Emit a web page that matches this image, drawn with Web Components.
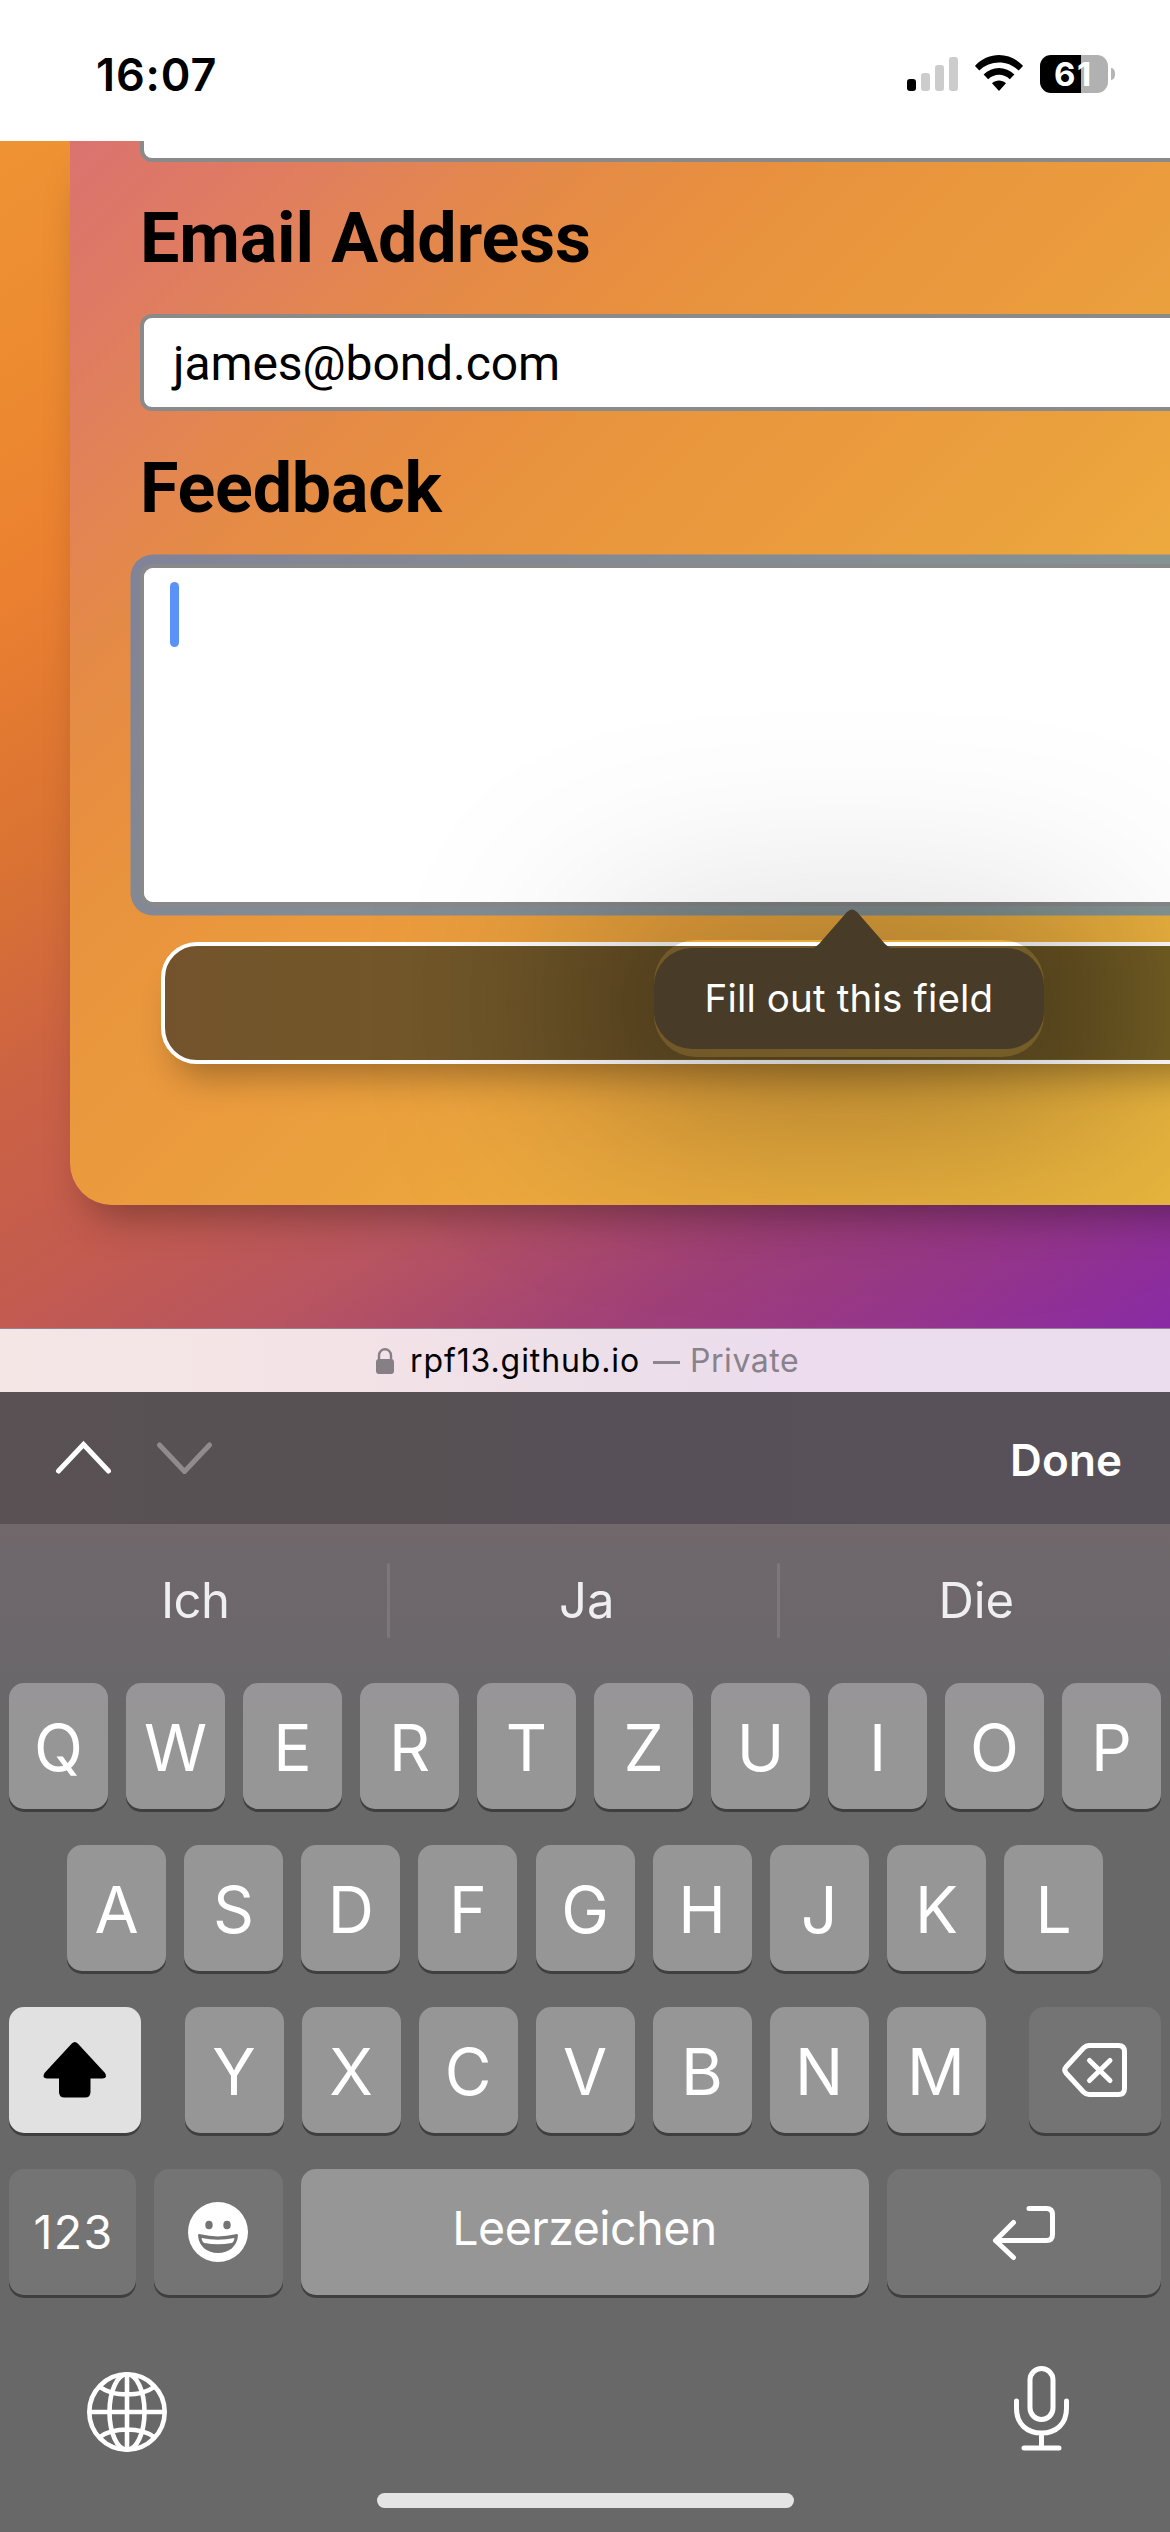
<!DOCTYPE html>
<html lang="de">
<head>
<meta charset="utf-8">
<title>Feedback form</title>
<style>
html,body{margin:0;padding:0;background:#686868}
body{width:1170px;height:2532px;overflow:hidden;font-family:Inter,"Liberation Sans",sans-serif}
</style>
</head>
<body>
<phone-screen></phone-screen>
<script>
const define = (name, html, init) => {
  const tpl = document.createElement('template');
  tpl.innerHTML = html;
  customElements.define(name, class extends HTMLElement {
    connectedCallback() {
      if (this.shadowRoot) return;
      this.attachShadow({ mode: 'open' }).append(tpl.content.cloneNode(true));
      if (init) init(this, this.shadowRoot);
    }
  });
};

/* Text whose visible glyphs span exactly `w` pixels, tracked to fit. */
define('ink-text', `
<style>
:host{display:block;flex:none;white-space:nowrap}
span{display:inline-block;white-space:pre;font-kerning:normal}
</style><span><slot></slot></span>`, (el, root) => {
  const w = +el.getAttribute('w'), text = el.textContent, cs = getComputedStyle(el);
  const ctx = document.createElement('canvas').getContext('2d');
  ctx.font = `${cs.fontWeight} ${cs.fontSize} ${cs.fontFamily}`;
  const m = ctx.measureText(text);
  const ink = m.actualBoundingBoxLeft + m.actualBoundingBoxRight;
  const span = root.querySelector('span');
  if (text.length > 1) span.style.letterSpacing = (w - ink) / (text.length - 1) + 'px';
  span.style.marginLeft = m.actualBoundingBoxLeft + 'px';
  el.style.width = w + 'px';
});

define('status-bar', `
<style>
:host{display:flex;box-sizing:border-box;height:141px;background:#fff;padding:54px 55px 0 98px;justify-content:space-between;align-items:flex-start;color:#000}
ink-text{font:600 45px/41px Inter,sans-serif}
.icons{display:flex;gap:17px;align-items:flex-start}
svg{display:block}
.signal{margin-top:3px}.wifi{margin-top:1px}
.batt{display:flex;gap:3px;align-items:center;margin-top:1px}
.cell{display:flex;align-items:center;width:68px;height:38px;border-radius:11px;background:linear-gradient(90deg,#000 41px,#b1b1b1 41px);color:#fff;padding-left:15px;box-sizing:border-box}
.cell ink-text{font:700 33px/38px Inter,sans-serif}
.nub{width:4px;height:12px;border-radius:0 5px 5px 0/0 6px 6px 0;background:#b5b5b5}
</style>
<ink-text w="117.5">16:07</ink-text>
<div class="icons">
<svg class="signal" width="51" height="34" viewBox="0 0 51 34"><rect y="22" width="9" height="12" rx="3"/><g fill="#ccc"><rect x="14" y="16" width="9" height="18" rx="3"/><rect x="28" y="8" width="9" height="26" rx="3"/><rect x="42" width="9" height="34" rx="3"/></g></svg>
<svg class="wifi" width="48" height="36" viewBox="0 0 48 36"><path d="M.5 10.2C14-3.4 34-3.4 47.5 10.2L48 11l-4.300 4.600C33 4.800 15 4.800 4.300 15.600L0 11z"/><path d="M8.600 19.500C17 10.800 31 10.800 39.400 19.500L34.800 24.200C29 18.200 19 18.200 13.200 24.200z"/><path d="M17 28.200C21 24.700 27 24.700 31 28.200L24 36z"/></svg>
<div class="batt"><div class="cell"><ink-text w="35">61</ink-text></div><div class="nub"></div></div>
</div>`);

define('field-label', `
<style>:host{display:flex;height:152.500px;padding-left:4px;color:#000}
ink-text{font:700 70px/154px Roboto,sans-serif}
:host([first]) ink-text{line-height:152px}</style>
<slot></slot>`, (el, root) => {
  const t = document.createElement('ink-text');
  t.setAttribute('w', el.getAttribute('w'));
  t.textContent = el.textContent;
  root.querySelector('slot').replaceWith(t);
});

define('email-input', `
<style>:host{display:flex;box-sizing:border-box;width:1120px;height:97px;border:4px solid #8a8a8a;border-radius:12px;background:#fff;padding-left:27px;color:#000}
ink-text{font:400 48px/91px Roboto,sans-serif}</style>
<ink-text w="386">james@bond.com</ink-text>`);

define('feedback-area', `
<style>:host{display:block;position:relative;box-sizing:border-box;width:1120px;height:342px;border:4.500px solid #8a898a;border-radius:13px;background:#fff;box-shadow:0 0 0 9.500px rgba(47,128,218,.55);padding:14px 26px}
:host::after{content:"";position:absolute;inset:0;border-radius:9px;z-index:2;background:rgba(255,255,255,.6)}
i{display:block;position:relative;z-index:3;width:9px;height:65px;border-radius:4.500px;background:#5a92f7}</style><i></i>`);

define('submit-button', `
<style>:host{display:block;box-sizing:border-box;width:1080px;height:122px;margin:36px 0 0 21px;border:4px solid #fff;border-radius:36px;background:linear-gradient(90deg,#74532c,#72562a 120px,#735929 500px,#755d28 860px,#766024 1010px);box-shadow:0 27px 36px -16px rgba(0,0,0,.32)}</style>`);

/* Drop shadow of the hint, cut out where the translucent bubble sits. */
define('hint-shadow', `
<style>:host{display:block;position:absolute;left:0;top:0;width:1170px;height:1187px;z-index:1;overflow:hidden;
clip-path:path(evenodd,"M0 0H1170V1187H0ZM696 799H1002A42 42 0 0 1 1044 841V874A42 42 0 0 1 1002 916H696A42 42 0 0 1 654 874V841A42 42 0 0 1 696 799Z")}
.glow{position:absolute;left:589px;top:788px;width:520px;height:150px;border-radius:60px;background:rgba(0,0,0,.45);filter:blur(108px)}
.tint{position:absolute;left:165px;top:806px;width:1005px;height:112px;background:linear-gradient(90deg,transparent 230px,rgba(0,0,0,.05) 360px,rgba(0,0,0,.12) 489px,rgba(0,0,0,.12) 895px,rgba(0,0,0,.03) 1005px)}</style>
<div class="glow"></div><div class="tint"></div>`);

define('hint-bubble', `
<style>:host{display:block;position:absolute;left:654px;top:799px;width:390px;height:117px;z-index:2}
.b{display:flex;align-items:center;justify-content:center;height:101px;margin-top:8px;border-radius:38px;background:#483b27;color:#fff;position:relative}
svg{position:absolute;left:157px;top:-39px}
ink-text{font:400 38.500px/101px Inter,sans-serif}</style>
<div class="b"><svg width="82" height="42" viewBox="0 0 82 42"><path d="M0 42V40Q4 39 8 35L36 3Q41-2 46 3L74 35Q78 39 82 40V42z" fill="#483c28"/></svg><ink-text w="283">Fill out this field</ink-text></div>`);

define('form-card', `
<style>:host{display:block;box-sizing:border-box;width:1240px;height:1064px;margin-left:70px;padding-left:70px;border-radius:0 0 42px 42px;
background:linear-gradient(135deg,#da7370 0,#df7c60 165px,#e1815a 226px,#e48a48 367px,#e8903e 515px,#e8933e 560px,#eb9c3d 800px,#eaa03d 900px,#eda83e 1050px,#e7b63e 1530px);
box-shadow:0 28px 42px -18px rgba(0,0,0,.34)}
.tail{box-sizing:border-box;width:1120px;height:20.500px;border:4px solid #8a8a8a;border-top:0;border-radius:0 0 12px 12px;background:#fff}</style>
<div class="tail"></div>
<field-label first w="445">Email Address</field-label>
<email-input></email-input>
<field-label w="299.500">Feedback</field-label>
<feedback-area></feedback-area>
<submit-button></submit-button>`);

define('web-page', `
<style>:host{display:block;position:relative;overflow:hidden;isolation:isolate;height:1187px;
background:linear-gradient(147deg,#ee9334 0,#ec8a30 218px,#eb8030 385px,#d97233 620px,#cb6244 805px,#c35b50 985px,#b85560 1136px,#a04078 1330px,#96368c 1480px,#8a2ba3 1623px)}</style>
<form-card></form-card><hint-shadow></hint-shadow><hint-bubble></hint-bubble>`);

define('address-bar', `
<style>:host{display:flex;box-sizing:border-box;height:64px;border-top:1px solid #94828f;padding:0 0 0 376px;align-items:center;background:linear-gradient(90deg,#f4e6e5,#f3e3e7 340px,#eddfe9 600px,#ecdcee 800px,#ebdcee);color:#000}
ink-text{font:400 32px/61px Inter,sans-serif}svg{margin-right:18px;flex:none}
.g{color:#88828a}.d{width:27px;height:3px;background:#8c858d;margin:3px 12px 0 15px}</style>
<svg width="18" height="26" viewBox="0 0 18 26"><rect y="11" width="18" height="15" rx="3" fill="#868086"/><path d="M3 12V7.500a6 6.300 0 0 1 12 0V12" fill="none" stroke="#868086" stroke-width="2.400"/></svg>
<ink-text w="226">rpf13.github.io</ink-text><div class="d"></div><ink-text class="g" w="106">Private</ink-text>`);

define('input-toolbar', `
<style>:host{display:flex;box-sizing:border-box;height:132px;align-items:center;padding:0 49px 0 54px;background:linear-gradient(90deg,#595153,#575154 430px,#575059 620px,#57515a)}
svg{margin-right:42px;margin-bottom:2px}ink-text{margin-left:auto;margin-top:3px;color:#fff;font:600 44px/60px Inter,sans-serif}</style>
<svg width="59" height="34" viewBox="0 0 59 34"><path d="M4.500 31L29.500 4.500L54.500 31" fill="none" stroke="#fff" stroke-width="5" stroke-linecap="round"/></svg>
<svg width="59" height="34" viewBox="0 0 59 34"><path d="M4.500 5L29.500 31.500L54.500 5" fill="none" stroke="#918b8e" stroke-width="5" stroke-linecap="round"/></svg>
<ink-text w="108">Done</ink-text>`);

define('suggestion-row', `
<style>:host{display:flex;height:159px;color:#efeff0}
div{flex:none;width:387px;display:flex;justify-content:center;box-sizing:border-box;padding-left:5px}
hr{flex:none;width:3px;height:75px;border:0;border-radius:2px;margin:39px 0 0;background:#7c777c}
ink-text{font:400 49px/154px Inter,sans-serif}</style>
<div><ink-text w="62">Ich</ink-text></div><hr><div><ink-text w="50">Ja</ink-text></div><hr><div style="width:390px"><ink-text w="70">Die</ink-text></div>`);

define('key-cap', `
<style>:host{display:flex;flex:none;box-sizing:border-box;width:99px;height:126px;border-radius:15px;justify-content:center;background:rgba(255,255,255,.305);box-shadow:0 3px 0 #3f3f3f;color:#fff;font:400 64px/129px Inter,sans-serif}
:host([dark]){background:#747474}
:host([on]){background:#e1e1e1}
:host([small]){font-size:46.500px}
::slotted(svg){display:block;flex:none}</style><slot></slot>`);

define('key-board', `
<style>:host{display:block;height:1008px;background:linear-gradient(180deg,#70686b 0,#6c676b 110px,#686868 210px,#686868);position:relative}
.row{display:flex;justify-content:space-between;padding:0 9px;height:162px}
.r2{padding:0 67px 0 67px}
.mid{display:flex;gap:18px}
.r4{justify-content:flex-start;gap:18px}
key-cap[small] ink-text{line-height:126px}
key-cap[small] .sp{line-height:119px}
.foot{display:flex;justify-content:space-between;padding:0 98px 0 85px}
.home{width:417px;height:15px;border-radius:8px;background:#e4e4e4;margin:40px auto 0}
</style>
<suggestion-row></suggestion-row>
<div class="row r1"></div>
<div class="row r2"></div>
<div class="row r3">
<key-cap on style="width:132px"><svg width="132" height="126" viewBox="0 0 132 126"><path d="M62.800 36.500Q65.800 33.500 68.800 36.500L96 66Q99 71 93.500 71.500H81.500V85Q81.500 90.500 76 90.500H55.500Q50 90.500 50 85V71.500H38Q32.500 71 35.500 66z"/></svg></key-cap>
<div class="mid"></div>
<key-cap dark style="width:132px"><svg width="132" height="126" viewBox="0 0 132 126" fill="none" stroke="#fff" stroke-width="5" stroke-linecap="round" stroke-linejoin="round"><path d="M60 38.500H89.500Q95.500 38.500 95.500 44.500V81.500Q95.500 87.500 89.500 87.500H60Q57 87.500 54.500 85L37 66Q34.500 63 37 60L54.500 41Q57 38.500 60 38.500zM60.500 53.500L81 73.500M81 53.500L60.500 73.500"/></svg></key-cap>
</div>
<div class="row r4">
<key-cap dark small style="width:127px"><ink-text w="74">123</ink-text></key-cap>
<key-cap dark style="width:129px"><svg width="129" height="126" viewBox="0 0 129 126"><circle cx="64" cy="63" r="30" fill="#fff"/><g fill="#747474"><ellipse cx="55" cy="56" rx="3.700" ry="4.300"/><ellipse cx="73" cy="56" rx="3.700" ry="4.300"/><path d="M44 66.500Q44 64.500 46.500 65.300Q64 69.500 81.500 65.300Q84 64.500 84 66.500C83 77.500 75 84 64 84S45 77.500 44 66.500z"/></g><path d="M47.500 69Q64 72.500 80.500 69C80 72 79 73.500 77.500 74Q64 76.500 50.500 74C49 73.500 48 72 47.500 69z" fill="#fff"/></svg></key-cap>
<key-cap small style="width:568px"><ink-text class="sp" w="257.500">Leerzeichen</ink-text></key-cap>
<key-cap dark style="width:274px"><svg width="274" height="126" viewBox="0 0 274 126" fill="none" stroke="#fff" stroke-width="5" stroke-linecap="round" stroke-linejoin="round"><path d="M142 39.500H159.500Q165.500 39.500 165.500 45.500V65.500Q165.500 71.500 159.500 71.500H108.500M126.500 53.500L108.500 71.500L126.500 88.500"/></svg></key-cap>
</div>
<div class="foot">
<svg width="84" height="122" viewBox="0 0 84 122" fill="none" stroke="#fff" stroke-width="4.600"><circle cx="42" cy="81" r="37.700"/><ellipse cx="42" cy="81" rx="17.500" ry="37.700"/><path d="M42 43V119M4 81H80M15 56Q25 63.500 42 63.500T69 56M15 106Q25 98.500 42 98.500T69 106"/></svg>
<svg width="60" height="122" viewBox="0 0 60 122" fill="none" stroke="#fff" stroke-width="5" stroke-linecap="round"><rect x="18" y="37.500" width="23" height="51" rx="11.500"/><path d="M4.500 70V77.500C4.500 93 15 102 29.500 102S54.500 93 54.500 77.500V70M29.500 102V116M12 117H47"/></svg>
</div>
<div class="home"></div>`, (el, root) => {
  const fill = (sel, letters) => {
    for (const c of letters) {
      const k = document.createElement('key-cap');
      k.textContent = c;
      root.querySelector(sel).append(k);
    }
  };
  fill('.r1', 'QWERTZUIOP');
  fill('.r2', 'ASDFGHJKL');
  fill('.mid', 'YXCVBNM');
});

define('phone-screen', `
<style>:host{display:flex;flex-direction:column;width:1170px;height:2532px;overflow:hidden}
:host>*{flex:none}</style>
<status-bar></status-bar><web-page></web-page><address-bar></address-bar><input-toolbar></input-toolbar><key-board></key-board>`);
</script>
</body>
</html>
